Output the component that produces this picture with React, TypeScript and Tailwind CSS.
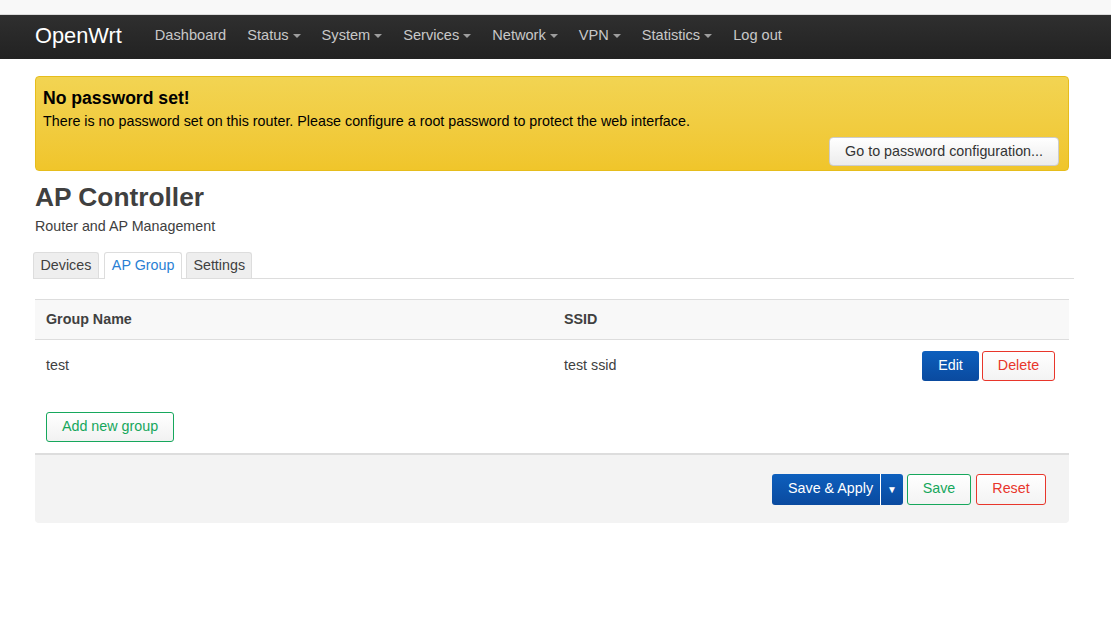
import React from 'react';

const navItems = [
  { label: 'Dashboard', caret: false },
  { label: 'Status', caret: true },
  { label: 'System', caret: true },
  { label: 'Services', caret: true },
  { label: 'Network', caret: true },
  { label: 'VPN', caret: true },
  { label: 'Statistics', caret: true },
  { label: 'Log out', caret: false },
];

const Caret = () => (
  <span className="ml-[4px] inline-block h-0 w-0 border-x-[4px] border-t-[4px] border-x-transparent border-t-[#9d9d9d] align-middle" />
);

export default function App() {
  return (
    <div className="min-h-[644px] bg-white font-['Liberation_Sans',Arial,sans-serif] text-[14.3px] text-[#404040]">
      <div className="h-[15px] border-b border-[#dcdcdc] bg-[#f8f8f8]" />

      <header className="flex h-[44px] items-center bg-gradient-to-b from-[#2f2f2f] to-[#222] pb-[2px] pl-[35px]">
        <span className="mr-[33px] text-[21.8px] text-white">OpenWrt</span>
        <nav className="flex items-center gap-[21px] text-[14.6px] text-[#c8c8c8]">
          {navItems.map((item) => (
            <span key={item.label} className="flex items-center">
              {item.label}
              {item.caret && <Caret />}
            </span>
          ))}
        </nav>
      </header>

      <main className="pl-[35px] pr-[42px] pt-[17px]">
        <div className="rounded-[4px] border border-[#e6bd1c] bg-gradient-to-b from-[#f2d452] to-[#f0c52a] pb-[4px] pl-[7px] pr-[9px] pt-[11px] text-black">
          <h4 className="text-[17.6px] font-bold leading-[20px]">No password set!</h4>
          <p className="mt-[3px] leading-[20px]">
            There is no password set on this router. Please configure a root password to protect the web interface.
          </p>
          <div className="flex justify-end pt-[6px]">
            <button className="h-[29px] rounded-[4px] border border-[#ccc] bg-gradient-to-b from-white to-[#ececec] px-[15px] text-[#333]">
              Go to password configuration...
            </button>
          </div>
        </div>

        <h2 className="mt-[11px] text-[26.3px] font-bold leading-[30px] text-[#404040]">AP Controller</h2>
        <p className="mt-[5px] leading-[18px]">Router and AP Management</p>

        <div className="-ml-[2px] mr-[-5px] mt-[17px] flex items-end border-b border-[#ddd]">
          <span className="h-[26px] rounded-t-[3px] border border-b-0 border-[#ddd] bg-[#eee] px-[6.5px] leading-[24px] text-[#404040]">Devices</span>
          <span className="-mb-px ml-[5px] h-[27px] rounded-t-[3px] border border-b-0 border-[#ddd] bg-white px-[7px] leading-[25px] text-[#2a7fd4]">AP Group</span>
          <span className="ml-[4px] h-[26px] rounded-t-[3px] border border-b-0 border-[#ddd] bg-[#eee] px-[6px] leading-[24px] text-[#404040]">Settings</span>
        </div>

        <div className="mt-[20px]">
          <div className="flex h-[41px] items-center border-y border-[#ddd] bg-[#f8f8f8] px-[11px] font-bold">
            <span className="w-[518px]">Group Name</span>
            <span>SSID</span>
          </div>
          <div className="flex h-[52px] items-center pl-[11px] pr-[14px]">
            <span className="w-[518px]">test</span>
            <span className="flex-1">test ssid</span>
            <div className="flex gap-[3px]">
              <button className="h-[30px] w-[57px] rounded-[3px] bg-gradient-to-b from-[#0d5fbd] to-[#0a4a9f] text-white">Edit</button>
              <button className="h-[30px] w-[73px] rounded-[3px] border border-[#e8362b] bg-gradient-to-b from-white to-[#f3f3f3] text-[#e8362b]">Delete</button>
            </div>
          </div>
          <div className="px-[11px] pb-[11px] pt-[20px]">
            <button className="h-[30px] w-[128px] rounded-[3px] border border-[#16a75c] bg-gradient-to-b from-white to-[#f1f1f1] text-[#16a75c]">Add new group</button>
          </div>
        </div>

        <div className="flex h-[70px] items-center justify-end rounded-b-[4px] border-t-2 border-[#ddd] bg-[#f3f3f3] pr-[23px]">
          <div className="flex h-[31px] w-[131px] overflow-hidden rounded-[3px] bg-gradient-to-b from-[#0d5fbd] to-[#0a4a9f] text-white">
            <span className="flex flex-1 items-center pl-[16px]">Save &amp; Apply</span>
            <span className="flex w-[23px] items-center justify-center border-l border-white text-[10px]">▼</span>
          </div>
          <button className="ml-[4px] h-[31px] w-[64px] rounded-[3px] border border-[#16a75c] bg-gradient-to-b from-white to-[#f3f3f3] text-[#16a75c]">Save</button>
          <button className="ml-[5px] h-[31px] w-[70px] rounded-[3px] border border-[#e8362b] bg-gradient-to-b from-white to-[#f3f3f3] text-[#e8362b]">Reset</button>
        </div>
      </main>
    </div>
  );
}
